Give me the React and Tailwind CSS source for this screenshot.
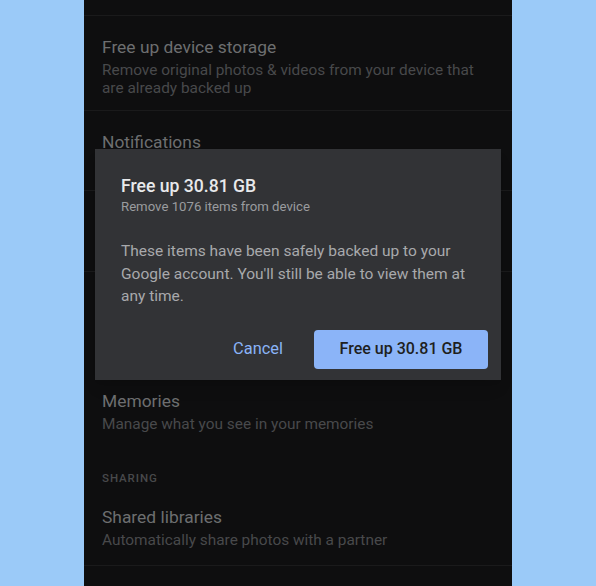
import React from 'react';

const font = { fontFamily: 'Roboto, "Noto Sans", sans-serif' };

function Item({ title, sub, className = '' }) {
  return (
    <div className={`px-[18px] border-b border-[#1a1a1b] ${className}`}>
      <div className="text-[17.4px] leading-[22px] text-[#6d6e70]">{title}</div>
      {sub && <div className="text-[15.4px] leading-[18px] text-[#48494b] mt-[3px]">{sub}</div>}
    </div>
  );
}

export default function App() {
  return (
    <div className="w-[596px] h-[586px] bg-[#9bcaf8] flex justify-center" style={font}>
      <div className="relative w-[428px] h-full bg-[#0e0e0f] overflow-hidden">
        <div className="h-[16px] border-b border-[#1a1a1b]" />
        <Item
          title="Free up device storage"
          sub="Remove original photos & videos from your device that are already backed up"
          className="h-[95px] pt-[20px]"
        />
        <Item title="Notifications" sub="Manage notifications" className="h-[80px] pt-[20px]" />
        <Item title="Sharing suggestions" sub="Show suggestions" className="h-[81px] pt-[20px]" />
        <Item title="Group similar faces" sub="Manage face grouping" className="h-[98px] pt-[20px] border-b-0" />
        <div className="h-[80px] px-[18px] pt-[20px]">
          <div className="text-[17.4px] leading-[22px] text-[#6d6e70]">Memories</div>
          <div className="text-[15.4px] leading-[18px] text-[#48494b] mt-[3px]">Manage what you see in your memories</div>
        </div>
        <div className="h-[45px] px-[18px] pt-[20px] text-[11.5px] tracking-[0.08em] font-medium text-[#48494b]">SHARING</div>
        <Item title="Shared libraries" sub="Automatically share photos with a partner" className="h-[71px] pt-[11px]" />

        <div className="absolute left-[11px] top-[149px] w-[406px] h-[231px] bg-[#323336] px-[26px] pt-[26px] flex flex-col shadow-lg">
          <div className="text-[17.6px] leading-[22px] font-medium text-[#e8e9eb]">Free up 30.81 GB</div>
          <div className="mt-[1px] text-[13.2px] leading-[18px] text-[#9a9c9f]">Remove 1076 items from device</div>
          <p className="mt-[24px] text-[15.5px] leading-[22.5px] text-[#a8a9ac]">
            These items have been safely backed up to your Google account. You'll still be able to view them at any time.
          </p>
          <div className="mt-[22px] flex justify-end items-center gap-[31px] -mr-[13px]">
            <span className="text-[16.4px] text-[#8ab4f8]">Cancel</span>
            <div className="w-[174px] h-[39px] rounded-[4px] bg-[#8bb4f8] flex items-center justify-center text-[16px] font-medium text-[#1e1f21]">
              Free up 30.81 GB
            </div>
          </div>
        </div>
      </div>
    </div>
  );
}
